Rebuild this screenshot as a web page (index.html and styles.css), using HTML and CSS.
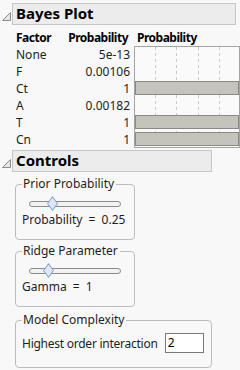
FILE: index.html
```html
<!DOCTYPE html>
<html>
<head>
<meta charset="utf-8">
<link rel="stylesheet" href="styles.css">
</head>
<body>
<div class="outline">
  <div class="ol-head first">
    <svg class="tri" width="9" height="9" viewBox="0 0 9 9"><polygon points="8.5,0.5 8.5,8.5 0.5,8.5" fill="#e6e6e6" stroke="#8c8c8c"/></svg>
    <div class="ol-title wide">Bayes Plot</div>
  </div>
  <div class="bayes">
    <div class="hdr">Factor</div>
    <div class="hdr num hnum">Probability</div>
    <div class="hdr plot-hdr">Probability</div>
    <div class="fac">None</div><div class="num">5e-13</div>
    <svg class="plot" width="106" height="102" viewBox="0 0 106 102">
      <rect x="0.5" y="0.5" width="105" height="101" fill="#fafafa" stroke="#a4a4a4"/>
      <g stroke="#c8c8c8" stroke-dasharray="3,3">
        <line x1="21.5" y1="1" x2="21.5" y2="101"/>
        <line x1="42.5" y1="1" x2="42.5" y2="101"/>
        <line x1="64.5" y1="1" x2="64.5" y2="101"/>
        <line x1="85.5" y1="1" x2="85.5" y2="101"/>
      </g>
      <g fill="#c4c4bc" stroke="#8a8a80">
        <rect x="1.5" y="35.5" width="103" height="13"/>
        <rect x="1.5" y="69.5" width="103" height="13"/>
        <rect x="1.5" y="86.5" width="103" height="13"/>
      </g>
    </svg>
    <div class="fac">F</div><div class="num">0.00106</div>
    <div class="fac">Ct</div><div class="num">1</div>
    <div class="fac">A</div><div class="num">0.00182</div>
    <div class="fac">T</div><div class="num">1</div>
    <div class="fac">Cn</div><div class="num">1</div>
  </div>
  <div class="ol-head">
    <svg class="tri" width="9" height="9" viewBox="0 0 9 9"><polygon points="8.5,0.5 8.5,8.5 0.5,8.5" fill="#e6e6e6" stroke="#8c8c8c"/></svg>
    <div class="ol-title narrow">Controls</div>
  </div>
  <div class="controls">
    <fieldset class="grp small">
      <legend>Prior Probability</legend>
      <div class="slider"><div class="thumb" style="left: 22px"></div></div>
      <div class="lbl">Probability = 0.25</div>
    </fieldset>
    <fieldset class="grp small">
      <legend>Ridge Parameter</legend>
      <div class="slider"><div class="thumb" style="left: 18px"></div></div>
      <div class="lbl">Gamma = 1</div>
    </fieldset>
    <fieldset class="grp large">
      <legend>Model Complexity</legend>
      <div class="row">
        <span class="lbl tight">Highest order interaction</span>
        <div class="input">2</div>
      </div>
    </fieldset>
  </div>
</div>
</body>
</html>
```
FILE: styles.css
```css
html, body {
  margin: 0;
  padding: 0;
  background: #f8f8f8;
}
body {
  font-family: "Noto Sans", "Liberation Sans", sans-serif;
  font-size: 12px;
  color: #1e1e1e;
  width: 240px;
  height: 370px;
  overflow: hidden;
}
.ol-head {
  display: flex;
  align-items: flex-end;
  padding-top: 2px;
}
.ol-head.first { padding-top: 3px; }
.tri {
  margin-left: 2px;
  margin-right: 1px;
  margin-bottom: 4px;
  flex: none;
}
.ol-title {
  box-sizing: border-box;
  height: 22px;
  border: 1px solid #c6c6c6;
  background: #ececec;
  font-weight: bold;
  font-size: 15px;
  line-height: 19px;
  padding-left: 3px;
  color: #000;
}
.ol-title.wide { width: 224px; }
.ol-title.narrow { width: 200px; }

.bayes {
  display: grid;
  grid-template-columns: 48px 62px 106px;
  grid-template-rows: repeat(7, 17px);
  column-gap: 4px;
  margin-left: 16px;
  margin-top: 4px;
  line-height: 17px;
}
.hdr {
  font-weight: bold;
  color: #000;
  letter-spacing: -0.5px;
  white-space: nowrap;
}
.hnum { padding-right: 2px; }
.plot-hdr { padding-left: 3px; }
.num { text-align: right; }
.plot {
  grid-column: 3;
  grid-row: 2 / span 6;
  display: block;
}
.controls {
  padding-left: 15px;
  padding-top: 4px;
}
.grp {
  margin: 0;
  border: 1px solid #bdbdbd;
  border-radius: 4px;
  padding: 0 0 0 6px;
  box-sizing: border-box;
}
.grp legend {
  padding: 0 2px 0 1px;
  line-height: 16px;
}
.grp.small {
  width: 120px;
  height: 64px;
  margin-bottom: 3px;
}
.grp.large {
  width: 197px;
  height: 56px;
  margin-top: 5px;
}
.slider {
  position: relative;
  margin: 9px 0 0 7px;
  width: 90px;
  height: 4px;
  border: 1px solid #8a8a8a;
  border-radius: 3px;
  background: #f2f2f2;
}
.thumb {
  position: absolute;
  top: -6px;
  width: 11px;
  height: 15px;
  margin-left: -5px;
  background: #7f9cc4;
  clip-path: polygon(50% 0, 100% 50%, 50% 100%, 0 50%);
}
.thumb::before {
  content: "";
  position: absolute;
  left: 1px;
  right: 1px;
  top: 1.5px;
  bottom: 1.5px;
  background: #dde8f6;
  clip-path: polygon(50% 0, 100% 50%, 50% 100%, 0 50%);
}
.lbl {
  line-height: 17px;
  margin-top: 4px;
  word-spacing: 3px;
}
.lbl.tight {
  word-spacing: 0;
  letter-spacing: -0.25px;
}
.row {
  display: flex;
  align-items: center;
  margin-top: 5px;
}
.row .lbl { margin-top: 0; }
.input {
  box-sizing: border-box;
  width: 39px;
  height: 20px;
  border: 1px solid #7a7a7a;
  background: #fff;
  margin-left: 7px;
  padding-left: 2px;
  line-height: 18px;
  color: #000;
}
```
